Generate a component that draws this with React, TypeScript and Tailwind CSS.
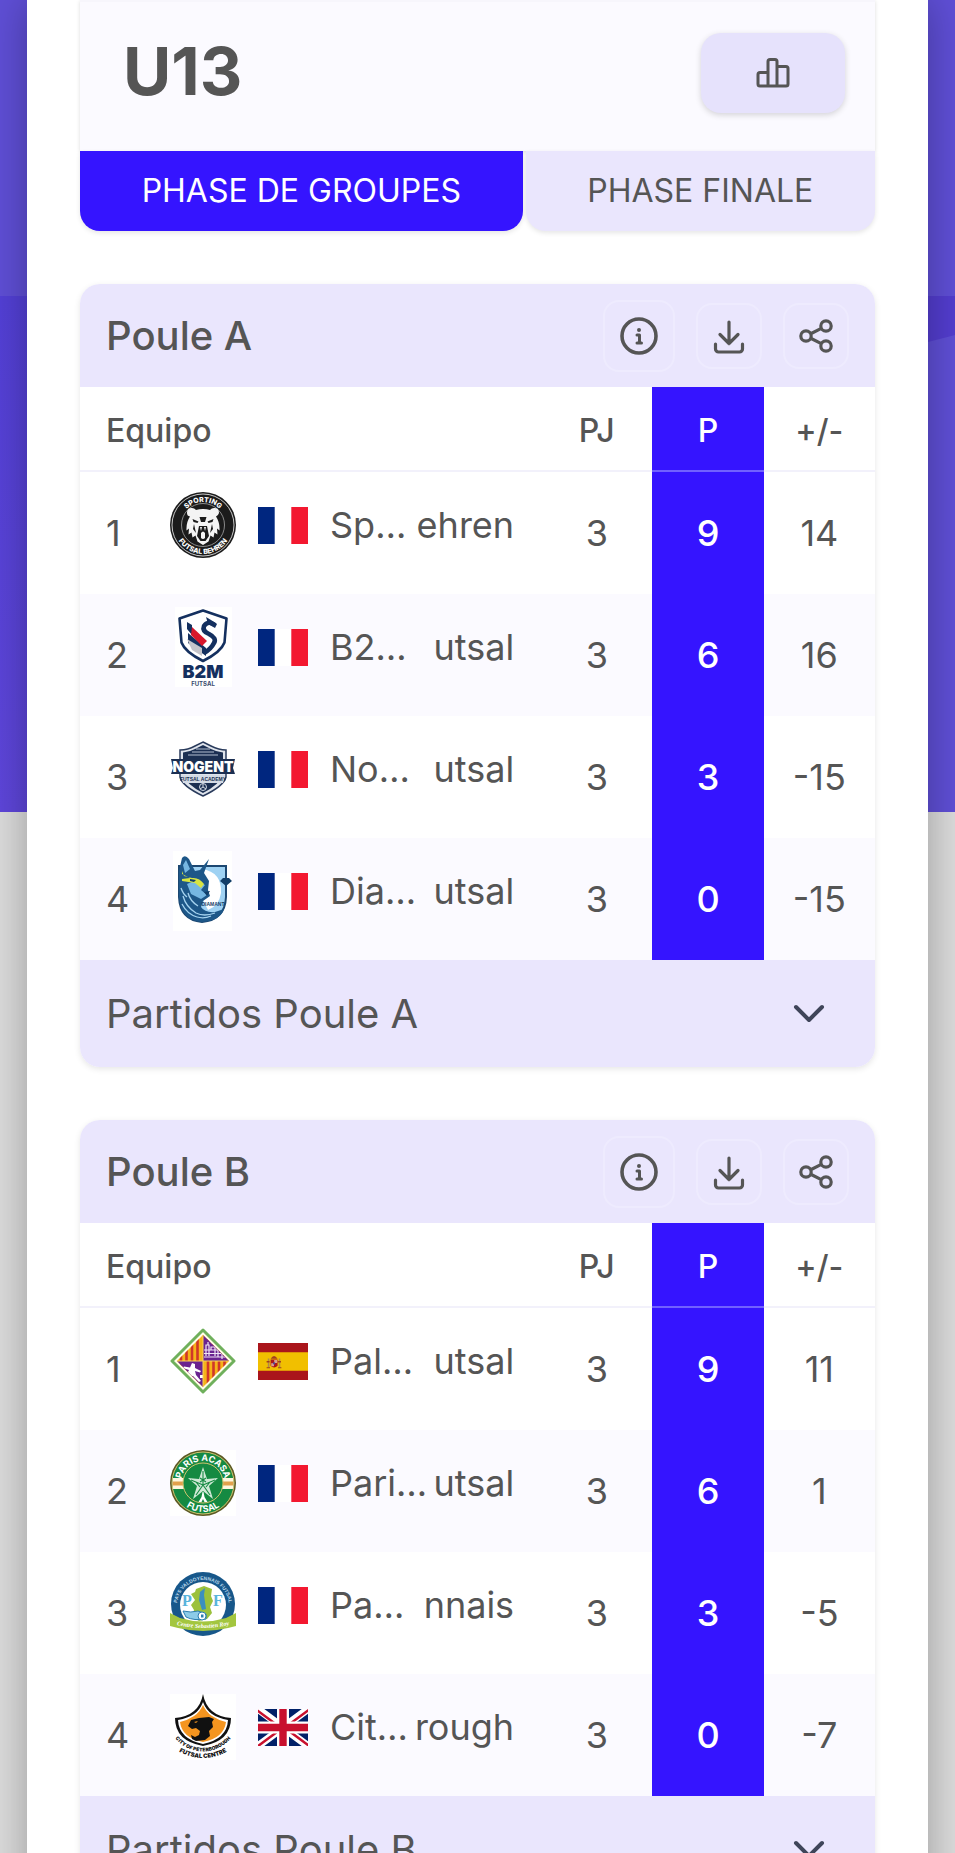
import type { ReactNode } from "react";

interface Team {
  left: string;
  right: string;
  logo: ReactNode;
  flag: ReactNode;
  played: number;
  points: number;
  diff: number;
}

/* ─── Flags ─── */
function FlagFrance() {
  return (
    <svg viewBox="0 0 50 37" className="h-[37px] w-[50px] shrink-0" role="img" aria-label="France">
      <path fill="#fff" d="M0 0h50v37H0z" />
      <path fill="#00267f" d="M0 0h16.7v37H0z" />
      <path fill="#f31830" d="M33.3 0H50v37H33.3z" />
    </svg>
  );
}

function FlagSpain() {
  return (
    <svg viewBox="0 0 50 37" className="h-[37px] w-[50px] shrink-0" role="img" aria-label="España">
      <path fill="#aa151b" d="M0 0h50v37H0z" />
      <path fill="#f1bf00" d="M0 9.3h50v18.5H0z" />
      <path fill="#ad1519" d="M12.6 16.5h7v6.2q-3.5 3.600-7 0z" />
      <path fill="#b08a4a" d="M9.8 15.5h1.600v9H9.800zM20.700 15.500h1.600v9h-1.600z" />
      <path fill="#a3401f" d="M12.600 15.800q3.400-5.400 7 0zM8.600 18h3v1.500h-3zM20 18h3v1.500h-3zM8.600 24.300h3.400v1H8.600zM20 24.300h3.400v1H20z" />
      <path fill="#d9a08c" d="M16.200 17h3v3h-3zM13.200 20.300h2.800v3h-2.800z" />
      <circle cx="16.100" cy="20.400" r="1.100" fill="#4a4a9a" />
    </svg>
  );
}

function FlagUk() {
  return (
    <svg viewBox="0 0 50 37" className="h-[37px] w-[50px] shrink-0" role="img" aria-label="United Kingdom">
      <path fill="#012169" d="M0 0h50v37H0z" />
      <path stroke="#fff" strokeWidth="7.500" d="M0 0l50 37M50 0L0 37" />
      <path stroke="#c8102e" strokeWidth="2.500" d="M-1 1.200l22 16.300M29 20.500l22 16.300M51 .8L29 17M21 21.500L-1 37.800" />
      <path stroke="#fff" strokeWidth="12" d="M25 0v37M0 18.500h50" />
      <path stroke="#c8102e" strokeWidth="7.400" d="M25 0v37M0 18.500h50" />
    </svg>
  );
}

/* ─── Club logos ─── */
function LogoBehren() {
  return (
    <svg viewBox="0 0 66 66" className="size-[66px] shrink-0" role="img" aria-label="Sporting Futsal Behren">
      <defs>
        <path id="behren-top" d="M10 33a23 23 0 0 1 46 0" />
        <path id="behren-bottom" d="M4 33a29 29 0 0 0 58 0" />
      </defs>
      <circle cx="33" cy="33" r="33" fill="#1b1b1b" />
      <circle cx="33" cy="33" r="31" fill="none" stroke="#c9c9c9" strokeWidth="1" />
      <circle cx="33" cy="33" r="21.500" fill="none" stroke="#8a8a8a" strokeWidth="1" />
      <text fill="#fff" fontSize="7" fontWeight="800" fontFamily="Inter, sans-serif" textAnchor="middle">
        <textPath href="#behren-top" startOffset="50%">SPORTING</textPath>
      </text>
      <text fill="#fff" fontSize="7" fontWeight="800" fontFamily="Inter, sans-serif" textAnchor="middle">
        <textPath href="#behren-bottom" startOffset="50%">FUTSAL BEHREN</textPath>
      </text>
      <path
        fill="#f4f4f4"
        d="M17 21q0-5 4-5 3-.5 5 2 3-1 7-1t7 1q2-2.500 5-2 4 0 4 5-1 3-3 3.500 4 6 3.500 14l-2.500-2 .5 6-3-2-1 5-3-2-2 6-5.500 3.500-5.500-3.500-2-6-3 2-1-5-3 2 .5-6-2.500 2q-.5-8 3.500-14-3-.5-3-3.500z"
      />
      <path fill="#1b1b1b" d="M29.500 25h7l-1.500 5h-4zM22.500 27l6 2.500-1 1.500-4-1zM43.500 27l-6 2.500 1 1.500 4-1zM29 34h8l2 10-3.500 5h-5L27 44zM24 32l2 9-3-4zM42 32l-2 9 3-4z" />
      <path fill="#f4f4f4" d="M31 41q2-3 4 0v5q-2 2-4 0zM30 35l1 4 1-4zM34 35l1 4 1-4z" />
    </svg>
  );
}

function LogoB2m() {
  return (
    <svg viewBox="0 0 66 80" className="h-20 w-[66px] shrink-0" role="img" aria-label="B2M Futsal">
      <path fill="#fff" d="M5 0h57v80H5z" />
      <path fill="#fff" stroke="#14305f" strokeWidth="2.600" strokeLinejoin="round" d="M33 3.500l23.500 8-2 24Q51 45 33 54 15 45 11.500 35.500l-2-24z" />
      <path fill="#14305f" d="M17 15l5 3v10l-5-6zM18 26l18 15v8L18 36z" />
      <path fill="#c4c4ca" d="M17 32l15 9v8l-10-6z" />
      <path fill="#d8172b" d="M22 20l15 14-5 5-11-11z" />
      <path fill="none" stroke="#14305f" strokeWidth="4.600" d="M45 18q-7-5-11 1-2 5 5 8 8 4 5 9-3 6-10 10" />
      <path fill="#14305f" d="M36 10l5 3 6 4-2 4-7-4z" />
      <text x="33" y="71" fill="#14305f" fontSize="18" fontWeight="900" fontFamily="Inter, sans-serif" textAnchor="middle">B2M</text>
      <text x="33" y="79" fill="#3b4d70" fontSize="6" fontWeight="700" fontFamily="Inter, sans-serif" textAnchor="middle">FUTSAL</text>
    </svg>
  );
}

function LogoNogent() {
  return (
    <svg viewBox="0 0 66 66" className="size-[66px] shrink-0" role="img" aria-label="Nogent Futsal Academy">
      <path fill="#dfe4ec" stroke="#2a3b5c" strokeWidth="1.500" d="M33 6l8 4q8 4 15 4v27q-2 9-23 19Q12 50 10 41V14q8 0 15-4z" />
      <path fill="#1b2f52" d="M33 9l8 4q6 3 12 3.500V24H13v-7.500Q19 16 25 13zM14 40h38q-2 8-19 17Q16 48 14 40z" />
      <path stroke="#b4bfd0" strokeWidth="1" d="M22 16h22M26 13h14M18 19h30" />
      <path fill="#1b2f52" d="M1 23h64l-2 9 2 6H1l2-6z" />
      <text x="33" y="36" fill="#fff" fontSize="14" fontWeight="900" fontFamily="Inter, sans-serif" textAnchor="middle">NOGENT</text>
      <path fill="#d3dae5" d="M11 39h44l-2 8H13z" />
      <text x="33" y="45" fill="#1b2f52" fontSize="5" fontWeight="700" fontFamily="Liberation Sans, sans-serif" textAnchor="middle">FUTSAL ACADEMY</text>
      <circle cx="33" cy="51" r="3.500" fill="none" stroke="#d3dae5" />
      <path stroke="#d3dae5" d="M33 47.500V51l3 2M33 51l-3 2" fill="none" />
    </svg>
  );
}

function LogoDiamant() {
  return (
    <svg viewBox="0 0 66 80" className="h-20 w-[66px] shrink-0" role="img" aria-label="Diamant Futsal">
      <path fill="#fff" d="M3 0h59v80H3z" />
      <path fill="#9fd2f3" stroke="#1c4771" strokeWidth="2" d="M9 15h47v31q-1 23-24 25Q10 69 9 46z" />
      <path fill="#fff" d="M32 18q20 3 19 24-2 13-13 17l-9-18z" />
      <path fill="#1d5788" d="M9 20l3-13q3-4 7 1l6 12 5-1 9-11-5 14 5 8-1 9 2 6-7 5-2 6q4 6 14 5l9-3q-4 12-22 13Q10 69 9 46z" />
      <path fill="#76b7e2" d="M13 14l3-5 4 9-5 4zM17 33l9-4 9 5-4 5 6 5-6 4-10-5z" />
      <path fill="#d7e442" d="M12 20l2 5 8 2q7-1 12 6l-3 4-6-5-13-2v-2l8-1-8-4z" />
      <path fill="none" stroke="#a5d3ef" strokeWidth="1.300" d="M13 45q3 11 13 17 8 4 19 0M12 53q5 10 15 13 7 2 14-1M18 42q2 8 10 13M11 37q2 6 6 9" />
      <path fill="#123e68" d="M20 28l6 1-2 2-4-1zM34 41l6-1-3 5zM50 30l3-3h6l3 3-6 5z" />
      <text x="43" y="55" fill="#173f68" fontSize="5" fontWeight="700" fontFamily="Liberation Sans, sans-serif" textAnchor="middle">DIAMANT</text>
    </svg>
  );
}

function LogoPalma() {
  return (
    <svg viewBox="0 0 66 66" className="size-[66px] shrink-0" role="img" aria-label="Palma Futsal">
      <defs>
        <clipPath id="palma-inner">
          <path d="M33 7l26 26-26 26L7 33z" />
        </clipPath>
      </defs>
      <path fill="#fffce8" stroke="#6fb05c" strokeWidth="3" strokeLinejoin="round" d="M33 2l31 31-31 31L2 33z" />
      <g clipPath="url(#palma-inner)">
        <path fill="#f6b21a" d="M0 0h66v66H0z" />
        <path stroke="#d0362a" strokeWidth="2.600" d="M11 0v66M16.500 0v66M22 0v66M27.500 0v66M38 0v66M43.500 0v66M49 0v66M54.500 0v66" />
        <path fill="#6a2390" d="M33 0h33v33H33zM0 33h33v33H0z" />
        <path stroke="#efe4f5" strokeWidth="1.200" fill="none" d="M36 28V17h3v11M34 22h14M41 22v-3h4v9M48 22v7M34 25.500h17M34 29h22M52 26v5M38 14v3" />
        <path fill="#fff" d="M22 35l3 1v4l6 3-1 1.500-5-1.500 1 4 5 6-2 1-6-6-5 1-3 3-1-2 3-4 2-4-6-2 1-1.500 6 1zM30 47h3v3h-3z" />
      </g>
      <path stroke="#f8d45a" strokeWidth="1" d="M33 7v52M7 33h52" />
    </svg>
  );
}

function LogoAcasa() {
  return (
    <svg viewBox="0 0 66 66" className="size-[66px] shrink-0" role="img" aria-label="Paris Acasa Futsal">
      <defs>
        <path id="acasa-top" d="M11 33a22 22 0 0 1 44 0" />
        <path id="acasa-bottom" d="M4 33a29 29 0 0 0 58 0" />
        <clipPath id="acasa-clip">
          <circle cx="33" cy="33" r="30.500" />
        </clipPath>
      </defs>
      <path fill="#fff" d="M0 0h66v66H0z" />
      <circle cx="33" cy="33" r="33" fill="#5c5a24" />
      <circle cx="33" cy="33" r="31" fill="#158a42" stroke="#d1c46f" strokeWidth="1" />
      <g clipPath="url(#acasa-clip)">
        <path fill="#fff7df" d="M2 28h62v11H2z" />
        <path fill="#e2a14c" d="M2 31.500h62v4H2z" />
      </g>
      <circle cx="33" cy="33" r="20" fill="#158a42" stroke="#d1c46f" strokeWidth="1" />
      <path fill="#cfe9d6" d="M33 17l4 12 11-1-9 8 4 13-10-8-10 8 4-13-9-8 11 1z" />
      <path fill="none" stroke="#158a42" strokeWidth="1.100" d="M33 21v14l-12-5M33 35l12-5M33 35l7 10M33 35l-7 10M30 28l6 4M36 28l-6 4M26 32l4 5M40 32l-4 5" />
      <path fill="#fff" d="M32.500 42h1l1 5 3 5h-3l-1.500-3-1.500 3h-3l3-5z" />
      <text fill="#fff" fontSize="9" fontWeight="700" fontFamily="Inter, sans-serif" textAnchor="middle">
        <textPath href="#acasa-top" startOffset="50%">PARIS ACASA</textPath>
      </text>
      <text fill="#fff" fontSize="9" fontWeight="700" fontFamily="Inter, sans-serif" textAnchor="middle">
        <textPath href="#acasa-bottom" startOffset="50%">FUTSAL</textPath>
      </text>
    </svg>
  );
}

function LogoValdoyennais() {
  return (
    <svg viewBox="0 0 66 66" className="size-[66px] shrink-0" role="img" aria-label="Pays Futsal">
      <defs>
        <path id="pays-top" d="M7 34a26 26 0 0 1 52 0" />
        <path id="pays-band" d="M7 53q26 6 52 0" />
      </defs>
      <circle cx="33" cy="32" r="32" fill="#17578a" />
      <circle cx="33" cy="33" r="23" fill="#fff" />
      <text fill="#b9d8ea" fontSize="5" fontWeight="700" fontFamily="Liberation Sans, sans-serif" textAnchor="middle">
        <textPath href="#pays-top" startOffset="50%">PAYS VALDOYENNAIS FUTSAL</textPath>
      </text>
      <path fill="#9bc13c" d="M26 17l8-3 8 3-1 7 2 5-3 6 2 6-5 6-8 2-7-4 2-7-3-5 4-5-4-6 4-2z" />
      <text x="17" y="34" fill="#59b4dc" fontSize="16" fontWeight="700" fontFamily="Liberation Serif, serif" textAnchor="middle">P</text>
      <text x="48" y="34" fill="#59b4dc" fontSize="16" fontWeight="700" fontFamily="Liberation Serif, serif" textAnchor="middle">F</text>
      <path fill="#3b8fc0" d="M30 20l5-4-1 7 2 14-4 1-3-10z" />
      <path fill="#8ccbe8" stroke="#2c7eb0" strokeWidth="1" d="M13 39q8 2 15 0l8 3v5q-12 2-20-2z" />
      <circle cx="32" cy="44" r="4" fill="#fff" stroke="#2c7eb0" />
      <path fill="#2c7eb0" d="M31 42.500h2.500v3H31z" />
      <path fill="#a3c63f" d="M0 41l10 5q23 7 46 0l10-5v13l-8 2q-25 6-50 0l-8-2z" />
      <text fill="#fff" fontSize="6" fontStyle="italic" fontWeight="700" fontFamily="Liberation Serif, serif" textAnchor="middle">
        <textPath href="#pays-band" startOffset="50%">Centre Sebastien Roy</textPath>
      </text>
    </svg>
  );
}

function LogoPeterborough() {
  return (
    <svg viewBox="0 0 66 66" className="size-[66px] shrink-0" role="img" aria-label="City of Peterborough Futsal Centre">
      <defs>
        <path id="peter-a" d="M1 38Q12 57 33 57.500 54 57 65 38" />
        <path id="peter-b" d="M3 54q30 20 60 0" />
      </defs>
      <path fill="#fff" d="M0 0h66v66H0z" />
      <path fill="#111" d="M33 0q2 11 9 17t19 7q0 23-28 28Q5 47 5 24q12-1 19-7t9-17z" />
      <path fill="#fff" d="M33 8q3 8 9 12t16 6q-1 19-25 24Q9 45 8 26q10-2 16-6t9-12z" />
      <path fill="#f5951f" d="M33 11q3 7 9 11t14 6q-2 16-23 20Q12 44 10 28q8-2 14-6t9-11z" />
      <path fill="#111" d="M18 32l3-6 8-2 10-1 5 2-2 3 1 5-4 4 1 5-5 4-9 1-4-2-1-4 4 2 4-2 1-4-4-3-4 1z" />
      <path fill="#f5951f" d="M24 28l4-1-2 2z" />
      <text fill="#111" fontSize="5" fontWeight="900" fontFamily="Inter, sans-serif" textAnchor="middle">
        <textPath href="#peter-a" startOffset="50%">CITY OF PETERBOROUGH</textPath>
      </text>
      <text fill="#111" fontSize="6" fontWeight="900" fontFamily="Inter, sans-serif" textAnchor="middle">
        <textPath href="#peter-b" startOffset="50%">FUTSAL CENTRE</textPath>
      </text>
    </svg>
  );
}

/* ─── Icons ─── */
function PodiumIcon() {
  return (
    <svg viewBox="0 0 34 30" className="h-[30px] w-[34px]" fill="none" stroke="#555" strokeWidth="3" strokeLinejoin="round" aria-hidden="true">
      <path d="M12 28V3.500a2 2 0 0 1 2-2h5a2 2 0 0 1 2 2V28M12 14.500H4a2 2 0 0 0-2 2V26a2 2 0 0 0 2 2h26a2 2 0 0 0 2-2V10.500a2 2 0 0 0-2-2h-9" />
    </svg>
  );
}

function InfoIcon() {
  return (
    <svg viewBox="0 0 40 40" className="size-10" fill="none" stroke="#555" strokeWidth="3.600" strokeLinecap="round" strokeLinejoin="round" aria-hidden="true">
      <circle cx="20" cy="20" r="17" />
      <path d="M18 19h2.500v8M18 27h4.500" strokeWidth="3" />
      <circle cx="20" cy="14" r="1" strokeWidth="2" fill="#555" />
    </svg>
  );
}

function DownloadIcon() {
  return (
    <svg viewBox="0 0 36 36" className="size-9" fill="none" stroke="#555" strokeWidth="3.200" strokeLinecap="round" strokeLinejoin="round" aria-hidden="true">
      <path d="M18 4v21.500M9 16.500l9 9 9-9M4.500 26v5a3 3 0 0 0 3 3h21a3 3 0 0 0 3-3v-5" />
    </svg>
  );
}

function ShareIcon() {
  return (
    <svg viewBox="0 0 36 36" className="size-9" fill="none" stroke="#555" strokeWidth="3.200" aria-hidden="true">
      <circle cx="8" cy="18" r="5.200" />
      <circle cx="28" cy="8" r="5.200" />
      <circle cx="28" cy="28" r="5.200" />
      <path d="M12.700 15.700l10.600-5.300M12.700 20.300l10.600 5.300" />
    </svg>
  );
}

function ChevronIcon() {
  return (
    <svg viewBox="0 0 32 20" className="h-5 w-8" fill="none" stroke="#3f4559" strokeWidth="4" strokeLinecap="round" strokeLinejoin="round" aria-hidden="true">
      <path d="M3 3l13 13L29 3" />
    </svg>
  );
}

/* ─── Hero backdrop, only its side strips show ─── */
function Backdrop() {
  return (
    <svg viewBox="0 0 955 812" preserveAspectRatio="none" className="absolute inset-x-0 top-0 h-[812px] w-full" aria-hidden="true">
      <defs>
        <linearGradient id="hero-wave" x1="0" y1="0" x2="0" y2="1">
          <stop offset="0" stopColor="#5340d6" />
          <stop offset="1" stopColor="#5e46da" />
        </linearGradient>
      </defs>
      <path fill="#5f4fd6" d="M0 0h955v812H0z" />
      <path fill="url(#hero-wave)" d="M0 296h500v516H0z" />
      <path fill="#533dcf" d="M500 296h455v39l-27 7H500z" />
    </svg>
  );
}

/* ─── Group card ─── */
function GroupCard({ name, teams }: { name: string; teams: Team[] }) {
  return (
    <section className="overflow-hidden rounded-[20px] bg-white shadow-[0_2px_6px_rgba(0,0,0,0.1)]">
      <header className="flex h-[103px] items-center justify-between bg-[#eae6fd] px-[26px]">
        <h2 className="text-[40px] leading-none font-medium">{name}</h2>
        <div className="flex items-center gap-[21px]">
          <button type="button" aria-label="Información" className="flex size-[72px] items-center justify-center rounded-2xl border-2 border-[#eeebfe]">
            <InfoIcon />
          </button>
          <button type="button" aria-label="Descargar" className="flex size-[66px] items-center justify-center rounded-2xl border-2 border-[#eeebfe]">
            <DownloadIcon />
          </button>
          <button type="button" aria-label="Compartir" className="flex size-[66px] items-center justify-center rounded-2xl border-2 border-[#eeebfe]">
            <ShareIcon />
          </button>
        </div>
      </header>

      <table className="w-full table-fixed border-separate border-spacing-0 text-center text-[36px] leading-none">
        <colgroup>
          <col className="w-[90px]" />
          <col />
          <col className="w-[14%]" />
          <col className="w-[14%]" />
          <col className="w-[14%]" />
        </colgroup>
        <thead>
          <tr className="h-[85px] text-[32px]">
            <th colSpan={2} className="border-b-2 border-[#f2f1fb] pt-1 pl-[26px] text-left font-medium">Equipo</th>
            <th className="border-b-2 border-[#f2f1fb] pt-1 font-medium">PJ</th>
            <th className="border-b-2 border-[#7161ff] bg-[#3514ff] pt-1 font-medium text-white">P</th>
            <th className="border-b-2 border-[#f2f1fb] pt-1 font-medium">+/-</th>
          </tr>
        </thead>
        <tbody>
          {teams.map((team, i) => (
            <tr key={team.left} className="h-[122px] even:bg-[#fbfaff]">
              <td className="pl-[26px] text-left">{i + 1}</td>
              <td className="pr-[27px] pb-4">
                <div className="flex h-20 items-center gap-[22px]">
                  {team.logo}
                  {team.flag}
                  <div className="flex flex-1 justify-between whitespace-nowrap">
                    <span>{team.left}</span>
                    <span>{team.right}</span>
                  </div>
                </div>
              </td>
              <td>{team.played}</td>
              <td className="bg-[#3514ff] font-medium text-white">{team.points}</td>
              <td>{team.diff}</td>
            </tr>
          ))}
        </tbody>
      </table>

      <button type="button" className="flex h-[107px] w-full items-center justify-between bg-[#eae6fd] pr-[50px] pl-[26px] text-left text-[40px] leading-none">
        Partidos {name}
        <ChevronIcon />
      </button>
    </section>
  );
}

const pouleA: Team[] = [
  { left: "Sp…", right: "ehren", logo: <LogoBehren />, flag: <FlagFrance />, played: 3, points: 9, diff: 14 },
  { left: "B2…", right: "utsal", logo: <LogoB2m />, flag: <FlagFrance />, played: 3, points: 6, diff: 16 },
  { left: "No…", right: "utsal", logo: <LogoNogent />, flag: <FlagFrance />, played: 3, points: 3, diff: -15 },
  { left: "Dia…", right: "utsal", logo: <LogoDiamant />, flag: <FlagFrance />, played: 3, points: 0, diff: -15 },
];

const pouleB: Team[] = [
  { left: "Pal…", right: "utsal", logo: <LogoPalma />, flag: <FlagSpain />, played: 3, points: 9, diff: 11 },
  { left: "Pari…", right: "utsal", logo: <LogoAcasa />, flag: <FlagFrance />, played: 3, points: 6, diff: 1 },
  { left: "Pa…", right: "nnais", logo: <LogoValdoyennais />, flag: <FlagFrance />, played: 3, points: 3, diff: -5 },
  { left: "Cit…", right: "rough", logo: <LogoPeterborough />, flag: <FlagUk />, played: 3, points: 0, diff: -7 },
];

/* ─── Page ─── */
export default function App() {
  return (
    <div className="relative h-screen overflow-hidden bg-[#dcdcdc] px-[27px] font-['Inter',sans-serif] text-[#555]">
      <Backdrop />
      <main className="relative flex min-h-full flex-col gap-[53px] bg-white px-[53px] shadow-[0_0_40px_rgba(0,0,0,0.3)]">
        <div>
          <div className="flex h-[151px] items-center justify-between border-t-2 border-[#f7f6fc] bg-[#fbfaff] pr-[30px] pb-2 pl-[43px] shadow-[0_1px_4px_rgba(0,0,0,0.14)]">
            <h1 className="pb-1 text-[66px] leading-none font-bold">U13</h1>
            <button type="button" aria-label="Clasificación" className="flex h-20 w-36 items-center justify-center rounded-[20px] bg-[#e6e2fc] shadow-[0_2px_6px_rgba(0,0,0,0.16)]">
              <PodiumIcon />
            </button>
          </div>
          <div className="flex gap-[3px] text-[32px] leading-none">
            <button type="button" className="h-20 flex-auto rounded-b-[20px] bg-[#3514ff] text-white shadow-[0_2px_5px_rgba(0,0,0,0.1)]">
              PHASE DE GROUPES
            </button>
            <button type="button" className="h-20 flex-auto rounded-b-[20px] bg-[#eae6fd] shadow-[0_2px_5px_rgba(0,0,0,0.1)]">
              PHASE FINALE
            </button>
          </div>
        </div>

        <GroupCard name="Poule A" teams={pouleA} />
        <GroupCard name="Poule B" teams={pouleB} />
      </main>
    </div>
  );
}
